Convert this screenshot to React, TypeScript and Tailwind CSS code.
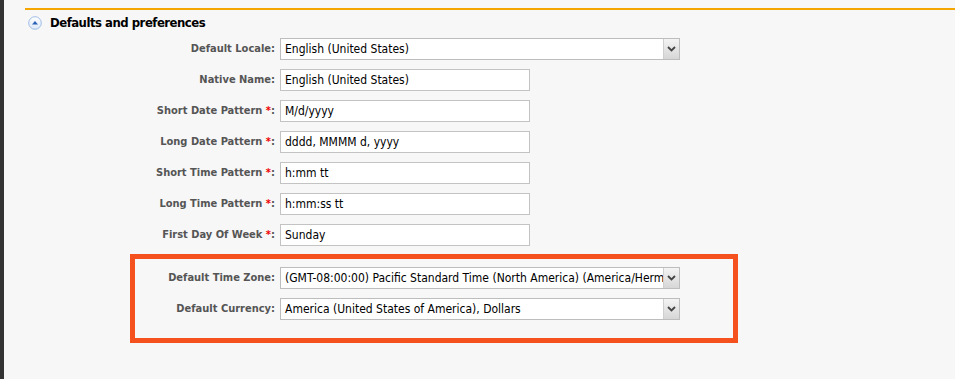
import React from 'react';

const font = { fontFamily: '"DejaVu Sans Condensed", "DejaVu Sans", sans-serif' };

function Label({ text, required, width }: { text: string; required?: boolean; width: string }) {
  return (
    <div className={`${width} shrink-0 text-right text-[11px] font-bold text-[#555]`}>
      {text}
      {required && <span className="text-[#e00]"> *</span>}:
    </div>
  );
}

function TextBox({ value }: { value: string }) {
  return (
    <div className="flex h-[22px] w-[250px] items-center border border-[#c3c3c3] bg-white pl-[4px] text-[12px] text-black">
      {value}
    </div>
  );
}

function SelectBox({ value }: { value: string }) {
  return (
    <div className="flex h-[22px] w-[400px] items-stretch border border-[#bdbdbd] bg-white text-[12px] text-black">
      <div className="flex flex-1 items-center overflow-hidden whitespace-nowrap pl-[4px]">{value}</div>
      <div className="flex w-[16px] items-center justify-center border-l border-[#cfcfcf] bg-gradient-to-b from-[#f4f4f4] to-[#d6d6d6]">
        <svg width="9" height="6" viewBox="0 0 9 6">
          <path d="M1 1 L4.5 4.5 L8 1" fill="none" stroke="#444" strokeWidth="1.8" />
        </svg>
      </div>
    </div>
  );
}

const rows = [
  { label: 'Native Name', value: 'English (United States)' },
  { label: 'Short Date Pattern', value: 'M/d/yyyy', required: true },
  { label: 'Long Date Pattern', value: 'dddd, MMMM d, yyyy', required: true },
  { label: 'Short Time Pattern', value: 'h:mm tt', required: true },
  { label: 'Long Time Pattern', value: 'h:mm:ss tt', required: true },
  { label: 'First Day Of Week', value: 'Sunday', required: true },
];

export default function App() {
  return (
    <div className="flex h-[379px] w-[955px] overflow-hidden bg-[#f7f7f7]" style={font}>
      <div className="w-[4px] shrink-0 bg-[#333]" />
      <div className="flex-1 pl-[21px] pt-[8px]">
        <div className="h-[2px] bg-[#f5a500]" />
        <div className="flex h-[24px] items-center gap-[8px] pl-[3px] pt-[2px]">
          <svg width="14" height="14" viewBox="0 0 14 14">
            <defs>
              <linearGradient id="g" x1="0" y1="0" x2="0" y2="1">
                <stop offset="0" stopColor="#ffffff" />
                <stop offset="1" stopColor="#dde8f7" />
              </linearGradient>
            </defs>
            <circle cx="7" cy="7" r="6.3" fill="url(#g)" stroke="#9fbde6" strokeWidth="1" />
            <path d="M4 8.5 L7 5 L10 8.5 Z" fill="#2a62b8" />
          </svg>
          <span className="text-[13px] font-bold tracking-[-0.5px] text-black">Defaults and preferences</span>
        </div>
        <div className="mt-[4px] flex flex-col gap-[9px]">
          <div className="flex items-center gap-[5px]">
            <Label text="Default Locale" width="w-[250px]" />
            <SelectBox value="English (United States)" />
          </div>
          {rows.map((r) => (
            <div key={r.label} className="flex items-center gap-[5px]">
              <Label text={r.label} required={r.required} width="w-[250px]" />
              <TextBox value={r.value} />
            </div>
          ))}
        </div>
        <div className="ml-[105px] mt-[8px] flex h-[89px] w-[608px] flex-col gap-[9px] border-[5px] border-[#f4511e] pt-[8px]">
          <div className="flex items-center gap-[5px]">
            <Label text="Default Time Zone" width="w-[140px]" />
            <SelectBox value="(GMT-08:00:00) Pacific Standard Time (North America) (America/Hermosillo)" />
          </div>
          <div className="flex items-center gap-[5px]">
            <Label text="Default Currency" width="w-[140px]" />
            <SelectBox value="America (United States of America), Dollars" />
          </div>
        </div>
      </div>
    </div>
  );
}
